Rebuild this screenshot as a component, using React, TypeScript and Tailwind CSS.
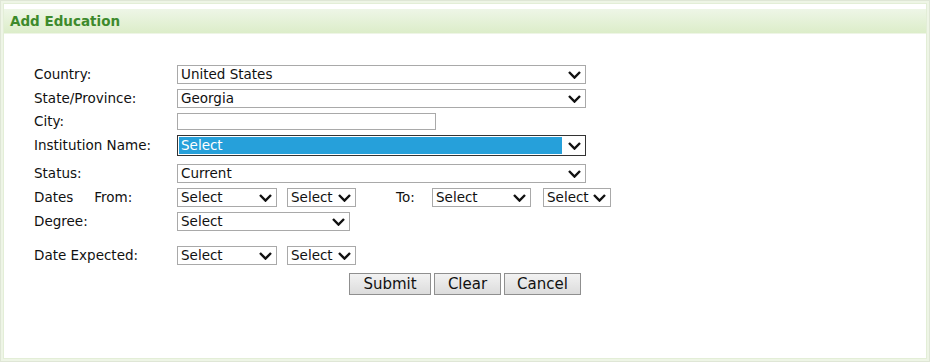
import React from 'react'

const font = { fontFamily: '"DejaVu Sans", Verdana, sans-serif' }

function Chevron() {
  return (
    <svg width="13" height="8" viewBox="0 0 13 8" className="shrink-0">
      <path d="M1 1 L6.5 6.6 L12 1" fill="none" stroke="#111" strokeWidth="2.4" />
    </svg>
  )
}

interface SelectProps {
  value: string
  width: string
  focused?: boolean
}

function FakeSelect({ value, width, focused }: SelectProps) {
  return (
    <div
      className={`${width} flex items-center justify-between bg-white pr-[4px] ${
        focused ? 'border border-[#333] h-[21px] p-[1px] pr-[4px]' : 'h-[19px] border border-[#a9a9a9] pl-[3px]'
      }`}
    >
      <span
        className={`text-[13.5px] leading-[15px] text-[#111] ${
          focused ? 'bg-[#26a0da] text-white flex-1 h-full pl-[2px] mr-[6px] flex items-center' : ''
        }`}
      >
        {value}
      </span>
      <Chevron />
    </div>
  )
}

function Label({ children }: { children: React.ReactNode }) {
  return <div className="w-[143px] shrink-0 text-[13.5px] leading-[17px] text-[#111]">{children}</div>
}

function Btn({ children, width }: { children: React.ReactNode; width: string }) {
  return (
    <button
      className={`${width} h-[22px] border border-[#8f8f8f] bg-gradient-to-b from-[#f2f2f2] to-[#dcdcdc] text-[15px] text-[#111] leading-none`}
    >
      {children}
    </button>
  )
}

export default function App() {
  return (
    <div className="w-[932px] h-[364px] bg-white" style={font}>
      <div className="w-[930px] h-[362px] border border-[#dfe6d6] bg-[#eef5e6] p-[2px] flex flex-col">
        <div className="flex-1 bg-white border border-[#e3eed7] flex flex-col">
          <div className="mt-[5px] h-[25px] bg-gradient-to-b from-[#eef6e7] to-[#dcedc9] border-b border-[#eef5e6] flex items-center px-[6px]">
            <span className="text-[13.5px] leading-[17px] font-bold text-[#3d8a2c]">Add Education</span>
          </div>

          <div className="pl-[30px] pt-[31px] flex flex-col">
            <div className="flex items-center">
              <Label>Country:</Label>
              <FakeSelect value="United States" width="w-[409px]" />
            </div>
            <div className="flex items-center mt-[5px]">
              <Label>State/Province:</Label>
              <FakeSelect value="Georgia" width="w-[409px]" />
            </div>
            <div className="flex items-center mt-[5px]">
              <Label>City:</Label>
              <div className="w-[259px] h-[17px] border border-[#a9a9a9] bg-white" />
            </div>
            <div className="flex items-center mt-[5px]">
              <Label>Institution Name:</Label>
              <FakeSelect value="Select" width="w-[409px]" focused />
            </div>
            <div className="flex items-center mt-[8px]">
              <Label>Status:</Label>
              <FakeSelect value="Current" width="w-[409px]" />
            </div>
            <div className="flex items-center mt-[5px]">
              <div className="w-[143px] shrink-0 text-[13.5px] leading-[17px] text-[#111] flex">
                <span>Dates</span>
                <span className="ml-[21px]">From:</span>
              </div>
              <FakeSelect value="Select" width="w-[100px]" />
              <div className="ml-[10px]">
                <FakeSelect value="Select" width="w-[69px]" />
              </div>
              <span className="ml-[40px] w-[36px] text-[13.5px] leading-[17px] text-[#111]">To:</span>
              <FakeSelect value="Select" width="w-[99px]" />
              <div className="ml-[12px]">
                <FakeSelect value="Select" width="w-[68px]" />
              </div>
            </div>
            <div className="flex items-center mt-[5px]">
              <Label>Degree:</Label>
              <FakeSelect value="Select" width="w-[173px]" />
            </div>
            <div className="flex items-center mt-[15px]">
              <Label>Date Expected:</Label>
              <FakeSelect value="Select" width="w-[100px]" />
              <div className="ml-[10px]">
                <FakeSelect value="Select" width="w-[69px]" />
              </div>
            </div>
            <div className="flex mt-[8px] pl-[315px] gap-[3px]">
              <Btn width="w-[82px]">Submit</Btn>
              <Btn width="w-[67px]">Clear</Btn>
              <Btn width="w-[77px]">Cancel</Btn>
            </div>
          </div>
        </div>
      </div>
    </div>
  )
}
